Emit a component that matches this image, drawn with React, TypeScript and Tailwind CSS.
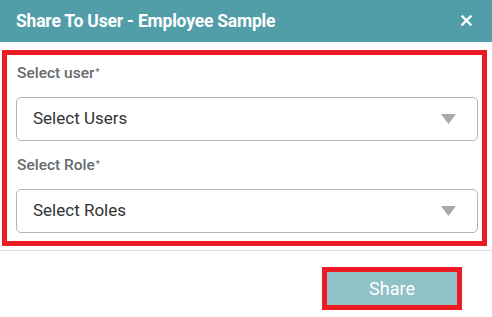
import React from 'react';

function Caret() {
  return (
    <svg width="15" height="10" viewBox="0 0 15 10" className="shrink-0">
      <polygon points="0,0 15,0 7.5,10" fill="#a9a9a9" />
    </svg>
  );
}

function SelectField({ label, placeholder }: { label: string; placeholder: string }) {
  return (
    <div className="flex flex-col">
      <div className="h-[22px] text-[15.5px] leading-[22px] font-medium text-[#666a6e] pl-[1px]">
        {label}
        <sup className="text-[9px] ml-[1px] relative -top-[3px]">*</sup>
      </div>
      <div className="mt-[13px] h-[44px] border border-[#b4b4b4] rounded-[5px] flex items-center justify-between pl-[16px] pr-[21px]">
        <span className="text-[17px] text-[#333]">{placeholder}</span>
        <Caret />
      </div>
    </div>
  );
}

export default function App() {
  return (
    <div className="w-[492px] h-[317px] bg-white overflow-hidden" style={{ fontFamily: 'Roboto, "Liberation Sans", sans-serif' }}>
      {/* Header */}
      <div className="h-[42px] bg-[#519ea8] flex items-center justify-between pl-4 pr-[20px]">
        <span className="text-white font-bold text-[17.5px] tracking-[-0.2px]">Share To User - Employee Sample</span>
        <svg width="11" height="11" viewBox="0 0 11 11" className="-mt-[2px]">
          <path d="M1.5 1.5 L9.5 9.5 M9.5 1.5 L1.5 9.5" stroke="white" strokeWidth="2.4" strokeLinecap="square" />
        </svg>
      </div>

      {/* Body */}
      <div className="mt-[8px] ml-[2px] mr-[5px] h-[196px] border-[5px] border-[#ed1c24] pt-[7px] pl-[9px] pr-[4px] flex flex-col gap-[13px]">
        <SelectField label="Select user" placeholder="Select Users" />
        <SelectField label="Select Role" placeholder="Select Roles" />
      </div>

      <div className="mt-[4px] border-t border-[#dcdde3]" />

      {/* Footer */}
      <div className="flex justify-end pr-[30px] pt-[16px]">
        <button className="w-[140px] h-[43px] border-[5px] border-[#ed1c24] bg-[#8fc1c7] text-white text-[18px] flex items-center justify-center">
          Share
        </button>
      </div>
    </div>
  );
}
